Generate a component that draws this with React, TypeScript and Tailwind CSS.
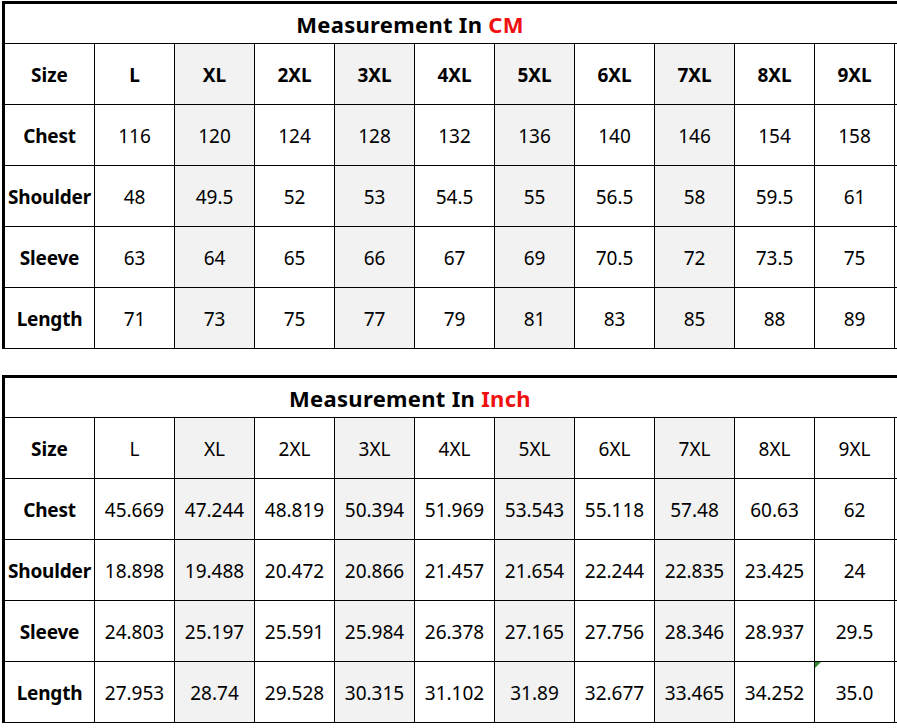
import React from "react";

const SIZES = ["L", "XL", "2XL", "3XL", "4XL", "5XL", "6XL", "7XL", "8XL", "9XL"];
const SHADED = new Set([1, 3, 5, 7]);

const cmRows: [string, string[]][] = [
  ["Chest", ["116", "120", "124", "128", "132", "136", "140", "146", "154", "158"]],
  ["Shoulder", ["48", "49.5", "52", "53", "54.5", "55", "56.5", "58", "59.5", "61"]],
  ["Sleeve", ["63", "64", "65", "66", "67", "69", "70.5", "72", "73.5", "75"]],
  ["Length", ["71", "73", "75", "77", "79", "81", "83", "85", "88", "89"]],
];

const inchRows: [string, string[]][] = [
  ["Chest", ["45.669", "47.244", "48.819", "50.394", "51.969", "53.543", "55.118", "57.48", "60.63", "62"]],
  ["Shoulder", ["18.898", "19.488", "20.472", "20.866", "21.457", "21.654", "22.244", "22.835", "23.425", "24"]],
  ["Sleeve", ["24.803", "25.197", "25.591", "25.984", "26.378", "27.165", "27.756", "28.346", "28.937", "29.5"]],
  ["Length", ["27.953", "28.74", "29.528", "30.315", "31.102", "31.89", "32.677", "33.465", "34.252", "35.0"]],
];

const font = { fontFamily: '"Noto Sans", "Open Sans", sans-serif' };

function SizeTable({
  unit,
  rows,
  boldHeader,
  marker,
}: {
  unit: string;
  rows: [string, string[]][];
  boldHeader: boolean;
  marker?: boolean;
}) {
  return (
    <div className="border-l-[3px] border-t-[3px] border-black text-black" style={font}>
      <div className="h-[40px] border-b border-black flex items-center justify-center pr-[82px] pt-[2px]">
        <span className="text-[22px] font-bold tracking-[0.3px]">
          Measurement In <span className="text-[#f01010]">{unit}</span>
        </span>
      </div>
      <div className="grid grid-cols-[90px_repeat(10,80px)_1fr]">
        <div className="h-[61px] border-r border-b border-black flex items-center justify-center pt-[3px] text-[19px] font-bold">
          Size
        </div>
        {SIZES.map((s, i) => (
          <div
            key={s}
            className={`h-[61px] border-r border-b border-black flex items-center justify-center pt-[3px] text-[19px] ${
              boldHeader ? "font-bold" : ""
            } ${SHADED.has(i) ? "bg-[#f2f2f2]" : ""}`}
          >
            {s}
          </div>
        ))}
        <div className="h-[61px] border-b border-black" />
        {rows.map(([label, vals], r) => (
          <React.Fragment key={label}>
            <div className="h-[61px] border-r border-b border-black flex items-center justify-center pt-[3px] text-[19px] font-bold tracking-[-0.2px]">
              {label}
            </div>
            {vals.map((v, i) => (
              <div
                key={i}
                className={`relative h-[61px] border-r border-b border-black flex items-center justify-center pt-[3px] text-[19px] ${
                  SHADED.has(i) ? "bg-[#f2f2f2]" : ""
                }`}
              >
                {marker && r === rows.length - 1 && i === 9 && (
                  <span className="absolute left-0 top-0 w-0 h-0 border-t-[6px] border-r-[6px] border-t-[#2e8b2e] border-r-transparent" />
                )}
                {v}
              </div>
            ))}
            <div className="h-[61px] border-b border-black" />
          </React.Fragment>
        ))}
      </div>
    </div>
  );
}

export default function App() {
  return (
    <div className="w-[897px] h-[728px] overflow-hidden bg-white pt-[1px] pl-[2px]">
      <SizeTable unit="CM" rows={cmRows} boldHeader />
      <div className="h-[26px]" />
      <SizeTable unit="Inch" rows={inchRows} boldHeader={false} marker />
    </div>
  );
}
